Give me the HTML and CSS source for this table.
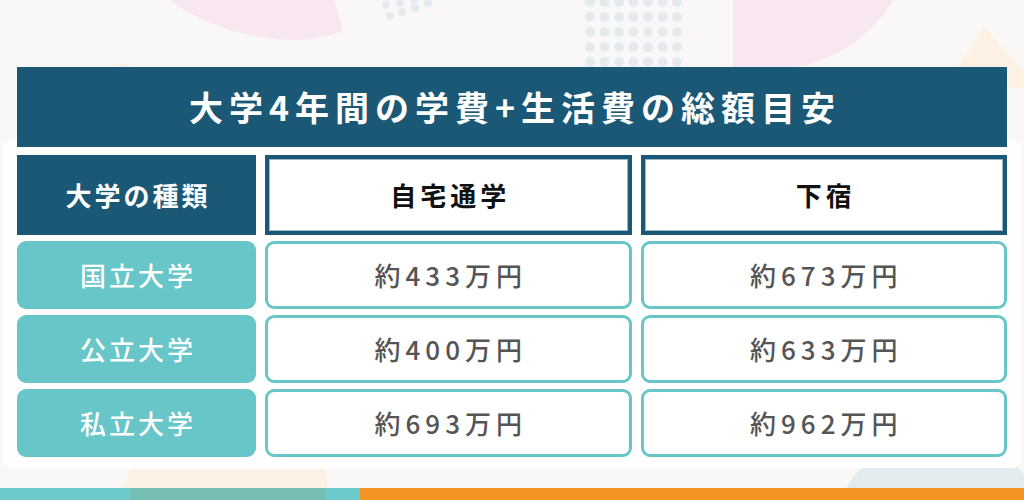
FILE: index.html
```html
<!DOCTYPE html>
<html lang="ja">
<head>
<meta charset="utf-8">
<link rel="stylesheet" href="styles.css">
</head>
<body>
<div class="page">
  <div class="deco">
    <svg class="deco-svg" width="1024" height="500" viewBox="0 0 1024 500">
      <path d="M170 0 C 200 25, 260 42, 300 40 C 318 39, 330 35, 343 31 L 334 0 Z" fill="#f8e6f0"/>
      <path d="M733 0 L 893 0 C 870 40, 830 62, 790 68 L 733 68 Z" fill="#f8e6f0"/>
      <path d="M983 27 L 1024 70 L 1024 88 L 945 88 Z" fill="#fdf1e3"/>
      <path d="M122 62 L 132 67 L 118 67 Z" fill="#fdf1e3"/>
      <g fill="#e4ebef">
        <g id="dotrow">
          <circle cx="590" cy="2" r="5"/><circle cx="604.5" cy="2" r="5"/><circle cx="619" cy="2" r="5"/><circle cx="633.5" cy="2" r="5"/><circle cx="648" cy="2" r="5"/><circle cx="662.5" cy="2" r="5"/><circle cx="677" cy="2" r="5"/>
        </g>
        <use href="#dotrow" y="15"/>
        <use href="#dotrow" y="30"/>
        <use href="#dotrow" y="45"/>
        <use href="#dotrow" y="60"/>
        <circle cx="386" cy="5" r="4"/><circle cx="400" cy="3" r="4"/><circle cx="414" cy="0" r="4"/>
        <circle cx="390" cy="16" r="4"/><circle cx="402" cy="12" r="4"/><circle cx="415" cy="8" r="4"/><circle cx="428" cy="3" r="4"/>
      </g>
      <circle cx="940" cy="545" r="110" fill="#e3ebee"/>
      <path d="M130 470 L 325 470 L 330 500 L 120 500 Z" fill="#fdf1e3"/>
    </svg>
  </div>

  <h1 class="title">大学4年間の学費+生活費の総額目安</h1>

  <div class="card">
    <div class="grid">
      <div class="cell head-dark">大学の種類</div>
      <div class="cell head">自宅通学</div>
      <div class="cell head">下宿</div>

      <div class="cell label">国立大学</div>
      <div class="cell value">約433万円</div>
      <div class="cell value">約673万円</div>

      <div class="cell label">公立大学</div>
      <div class="cell value">約400万円</div>
      <div class="cell value">約633万円</div>

      <div class="cell label">私立大学</div>
      <div class="cell value">約693万円</div>
      <div class="cell value">約962万円</div>
    </div>
  </div>

  <div class="strip">
    <div class="strip-teal"><div class="strip-shade"></div></div>
    <div class="strip-orange"></div>
  </div>
</div>
</body>
</html>
```

FILE: styles.css
```css
html, body {
  margin: 0;
  padding: 0;
}

body {
  width: 1024px;
  height: 500px;
  overflow: hidden;
  background: #faf8f6;
  font-family: "Noto Sans CJK JP", "Noto Sans", sans-serif;
}

.page {
  position: relative;
  width: 1024px;
  height: 500px;
  padding-top: 67px;
  box-sizing: border-box;
}

.deco {
  position: absolute;
  left: 0;
  top: 0;
  width: 1024px;
  height: 500px;
  z-index: 0;
}

.deco-svg {
  display: block;
}

.title {
  position: relative;
  z-index: 2;
  margin: 0 17px;
  height: 80px;
  background: #1b5876;
  color: #ffffff;
  font-size: 34px;
  font-weight: 700;
  letter-spacing: 6px;
  display: flex;
  align-items: center;
  justify-content: center;
  padding-left: 6px;
  line-height: 1;
}

.card {
  position: relative;
  z-index: 1;
  margin: -7px 2px 0;
  background: #ffffff;
  border-radius: 10px;
  padding: 15px 15px 11px;
}

.grid {
  display: grid;
  grid-template-columns: 239px 1fr 1fr;
  grid-template-rows: 80px 68px 68px 68px;
  column-gap: 9px;
  row-gap: 6px;
}

.cell {
  display: flex;
  align-items: center;
  justify-content: center;
  box-sizing: border-box;
  line-height: 1;
}

.head-dark {
  background: #1b5876;
  color: #ffffff;
  font-size: 26px;
  font-weight: 700;
  letter-spacing: 3px;
  padding-left: 3px;
}

.head {
  background: #ffffff;
  border: 4px solid #1b5876;
  box-shadow: inset 0 0 0 1px #9ab6c4;
  color: #111111;
  font-size: 26px;
  font-weight: 700;
  letter-spacing: 4px;
  padding-left: 4px;
}

.label {
  background: #68c6c8;
  border-radius: 9px;
  color: #ffffff;
  font-size: 26px;
  font-weight: 500;
  letter-spacing: 3px;
  padding-left: 3px;
}

.value {
  background: #ffffff;
  border: 3px solid #68c6c8;
  border-radius: 9px;
  color: #555555;
  font-size: 26px;
  font-weight: 500;
  letter-spacing: 5px;
  padding-left: 5px;
}

.strip {
  position: relative;
  z-index: 1;
  display: flex;
  margin-top: 20px;
  height: 12px;
}

.strip-teal {
  position: relative;
  width: 360px;
  background: #6ccaca;
}

.strip-shade {
  position: absolute;
  left: 130px;
  top: 0;
  width: 195px;
  height: 12px;
  background: #76beb4;
}

.strip-orange {
  flex: 1;
  background: #f39321;
}
```
